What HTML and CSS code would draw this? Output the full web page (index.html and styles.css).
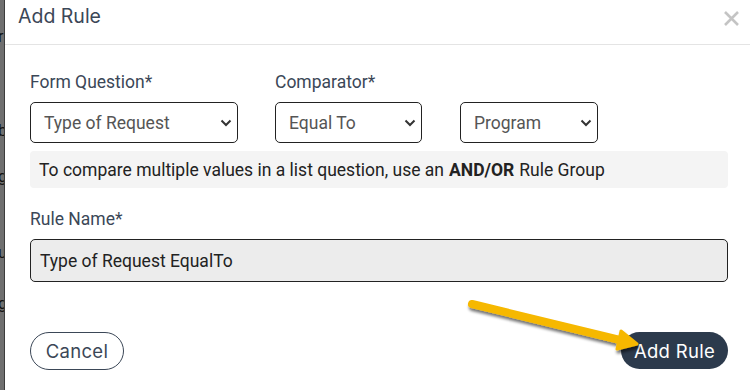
FILE: index.html
```html
<!DOCTYPE html>
<html>
	<head>
		<meta charset="UTF-8">
		<title>Add Rule</title>
		<link rel="stylesheet" href="styles.css">
	</head>
	<body>
		<div class="page">
			<div class="backdrop">
				<span class="bd-txt t1">r</span>
				<span class="bd-txt t2">b</span>
				<span class="bd-txt t3">g</span>
				<span class="bd-txt t4">u</span>
				<span class="bd-txt t5">g</span>
			</div>
			<div class="modal">
				<div class="modal-head">
					<span class="modal-title">Add Rule</span>
					<svg class="close" width="17" height="17" viewBox="0 0 17 17">
						<path d="M2 2L15 15M15 2L2 15" stroke="#c4c4c4" stroke-width="2.6" fill="none"/>
					</svg>
				</div>
				<div class="modal-body">
					<div class="row">
						<div class="field f1">
							<label>Form Question*</label>
							<div class="select">
								<span>Type of Request</span>
								<svg width="12" height="8" viewBox="0 0 12 8"><path d="M1.5 1.5L6 6L10.5 1.5" stroke="#333" stroke-width="2" fill="none"/></svg>
							</div>
						</div>
						<div class="field f2">
							<label>Comparator*</label>
							<div class="select">
								<span>Equal To</span>
								<svg width="12" height="8" viewBox="0 0 12 8"><path d="M1.5 1.5L6 6L10.5 1.5" stroke="#333" stroke-width="2" fill="none"/></svg>
							</div>
						</div>
						<div class="field f3">
							<div class="select">
								<span>Program</span>
								<svg width="12" height="8" viewBox="0 0 12 8"><path d="M1.5 1.5L6 6L10.5 1.5" stroke="#333" stroke-width="2" fill="none"/></svg>
							</div>
						</div>
					</div>
					<div class="info">To compare multiple values in a list question, use an <b>AND/OR</b> Rule Group</div>
					<label class="name-label">Rule Name*</label>
					<div class="name-input">Type of Request EqualTo</div>
					<div class="actions">
						<button class="btn cancel">Cancel</button>
						<button class="btn add">Add Rule</button>
					</div>
				</div>
			</div>
			<!-- annotation arrow -->
			<svg class="arrow" width="750" height="390" viewBox="0 0 750 390">
				<defs>
					<filter id="sh" x="-10%" y="-30%" width="130%" height="180%">
						<feGaussianBlur in="SourceAlpha" stdDeviation="1.6"/>
						<feOffset dx="1" dy="2.5"/>
						<feComponentTransfer><feFuncA type="linear" slope="0.55"/></feComponentTransfer>
						<feMerge><feMergeNode/><feMergeNode in="SourceGraphic"/></feMerge>
					</filter>
				</defs>
				<g filter="url(#sh)">
					<path d="M472 304L624 341" stroke="#f6b800" stroke-width="8" stroke-linecap="round" fill="none"/>
					<path d="M637 344L621 331L617 349Z" fill="#f6b800" stroke="#f6b800" stroke-width="3" stroke-linejoin="round"/>
				</g>
			</svg>
		</div>
	</body>
</html>
```

FILE: styles.css
```css
html, body{
	margin: 0;
	padding: 0;
	background: #fff;
}
.page{
	position: relative;
	display: flex;
	width: 750px;
	height: 390px;
	overflow: hidden;
}
.backdrop{
	position: relative;
	width: 4px;
	flex: none;
	background: #6f6f6f;
	border-right: 1px solid #3c3c3c;
	overflow: hidden;
}
.bd-txt{
	position: absolute;
	left: -2px;
	font-family: "Roboto", sans-serif;
	font-size: 16px;
	color: #111;
}
.t1{ top: 27px; }
.t2{ top: 121px; }
.t3{ top: 167px; }
.t4{ top: 243px; }
.t5{ top: 294px; }
.modal{
	flex: 1;
	background: #fff;
}
.modal-head{
	height: 45px;
	display: flex;
	align-items: center;
	justify-content: space-between;
	padding: 0 10px 0 13px;
	border-bottom: 1px solid #e4e4e4;
	box-sizing: border-box;
}
.modal-title{
	font-family: "Inter", sans-serif;
	font-size: 19.5px;
	color: #3b4757;
	margin-top: -13px;
}
.close{
	margin-top: -7px;
}
.modal-body{
	padding: 27px 22px 0 25px;
	font-family: "Roboto", sans-serif;
	font-size: 17.5px;
}
.row{
	display: flex;
	gap: 37px;
	align-items: flex-end;
}
.field label{
	display: block;
	color: #3b4757;
	line-height: 20px;
	margin-bottom: 10px;
}
.f1 .select{ width: 208px; }
.f2 .select{ width: 147px; }
.f3 .select{ width: 138px; margin-left: 1px; }
.select{
	height: 41px;
	box-sizing: border-box;
	border: 1px solid #222;
	border-radius: 5px;
	display: flex;
	align-items: center;
	justify-content: space-between;
	padding: 0 5px 0 13px;
	color: #555;
}
.info{
	margin-top: 8px;
	height: 37px;
	background: #f4f4f4;
	border-radius: 4px;
	display: flex;
	align-items: center;
	padding-left: 9px;
	color: #222;
}
.info b{
	margin: 0 5px;
}
.name-label{
	display: block;
	margin-top: 21px;
	color: #3b4757;
	line-height: 20px;
}
.name-input{
	margin-top: 10px;
	height: 43px;
	box-sizing: border-box;
	background: #ececec;
	border: 1px solid #222;
	border-radius: 5px;
	display: flex;
	align-items: center;
	padding-left: 9px;
	color: #222;
}
.actions{
	margin-top: 50px;
	display: flex;
	justify-content: space-between;
}
.btn{
	font-family: "Inter", sans-serif;
	font-size: 18.5px;
	letter-spacing: 0.3px;
	border-radius: 20px;
	height: 38px;
	padding: 0;
	cursor: pointer;
}
.cancel{
	width: 94px;
	background: #fff;
	border: 1px solid #3b4757;
	color: #3b4757;
}
.add{
	width: 107px;
	height: 37px;
	background: #2c3a4c;
	border: none;
	color: #fff;
}
.arrow{
	position: absolute;
	left: 0;
	top: 0;
	pointer-events: none;
}
```
